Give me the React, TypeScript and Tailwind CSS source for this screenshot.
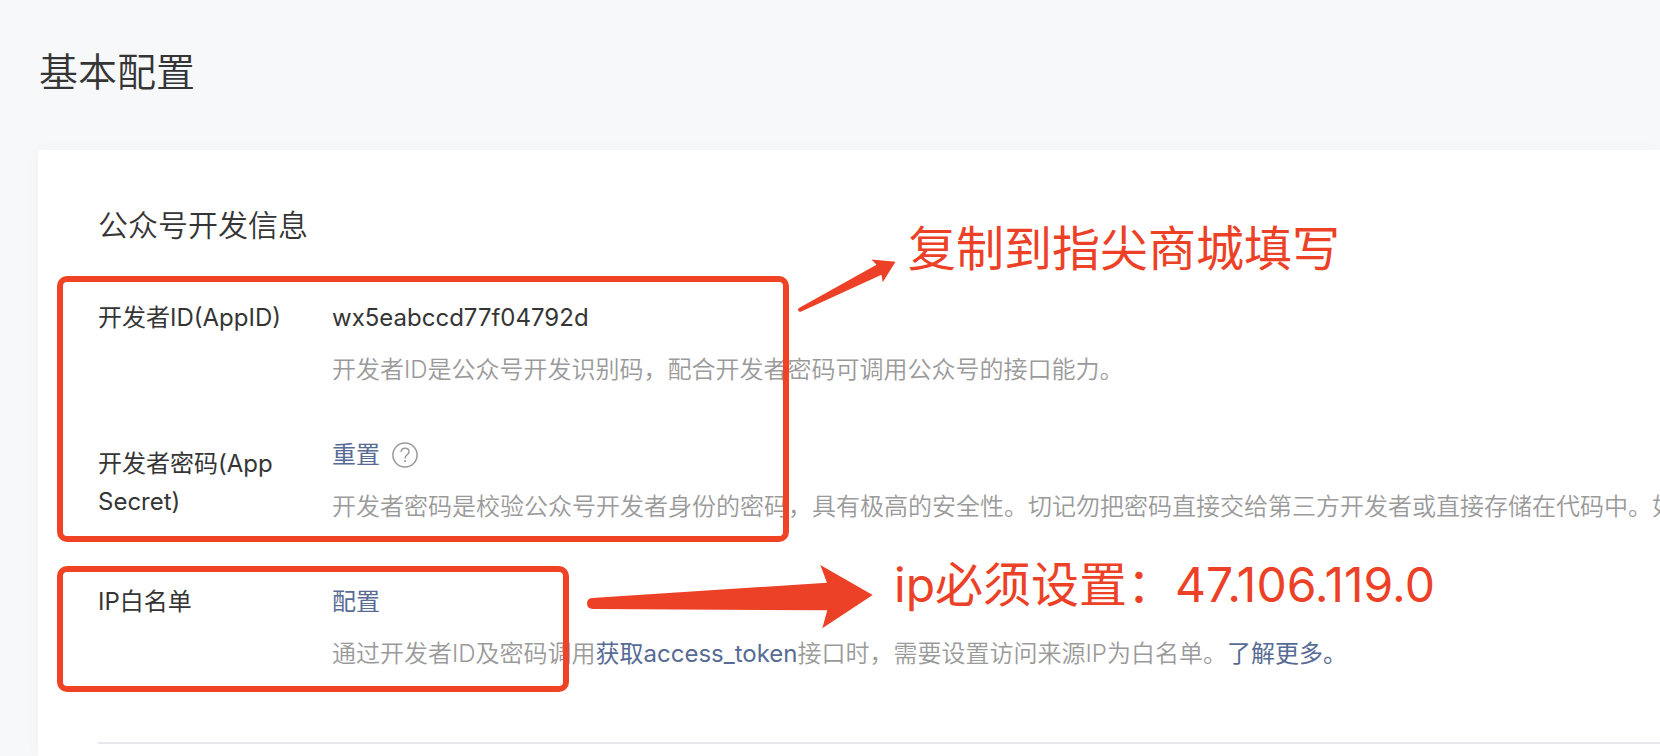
import clsx from 'clsx';
import type { ReactNode } from 'react';

type RowProps = {
  label: string;
  value: ReactNode;
  desc: ReactNode;
  labelClassName?: string;
};

function Row({ label, value, desc, labelClassName }: RowProps) {
  return (
    <div className="flex gap-11">
      <dt className={clsx('w-[190px] shrink-0', labelClassName)}>{label}</dt>
      <dd className="flex flex-col gap-[14px] whitespace-nowrap">
        <div className="flex items-center gap-3">{value}</div>
        <p className="font-[350] text-[#9a9a9a]">{desc}</p>
      </dd>
    </div>
  );
}

function HelpIcon() {
  return (
    <svg
      viewBox="0 0 26 26"
      className="size-[26px]"
      fill="none"
      stroke="#9a9a9a"
      strokeWidth="1.5"
    >
      <circle cx="13" cy="13" r="12.1" />
      <path d="M9.2 10c0-2.3 1.6-3.7 3.9-3.7s3.9 1.4 3.9 3.5c0 1.5-.8 2.2-2 3.1-1.3 1-1.9 1.7-1.9 3.6" />
      <path d="M13.1 18.3v1.8" strokeWidth="1.8" />
    </svg>
  );
}

export default function App() {
  return (
    <div className="relative min-h-screen overflow-hidden bg-[#f7f8fa] font-['Inter','Noto_Sans_CJK_SC',sans-serif] text-[24px] leading-[38px] text-[#353535]">
      <h1 className="px-[39px] pt-11 pb-[50px] text-[39px] leading-[56px] font-[350]">
        基本配置
      </h1>

      <main className="ml-[38px] min-h-[606px] rounded-tl bg-white pt-[54px] pl-[60px] shadow-[0_1px_16px_rgba(0,0,0,0.03)]">
        <h2 className="text-[30px] leading-[42px] font-[350]">
          公众号开发信息
        </h2>

        <dl className="flex flex-col gap-[47px] pt-[53px]">
          <Row
            label="开发者ID(AppID)"
            value="wx5eabccd77f04792d"
            desc="开发者ID是公众号开发识别码，配合开发者密码可调用公众号的接口能力。"
          />
          <Row
            labelClassName="pt-[9px] pb-[15px]"
            label="开发者密码(App Secret)"
            value={
              <>
                <button type="button" className="text-[#576b95]">
                  重置
                </button>
                <button type="button" aria-label="帮助">
                  <HelpIcon />
                </button>
              </>
            }
            desc="开发者密码是校验公众号开发者身份的密码，具有极高的安全性。切记勿把密码直接交给第三方开发者或直接存储在代码中。如"
          />
          <Row
            label="IP白名单"
            value={
              <button type="button" className="text-[#576b95]">
                配置
              </button>
            }
            desc={
              <>
                通过开发者ID及密码调用
                <a href="#token" className="font-normal text-[#576b95]">
                  获取access_token
                </a>
                接口时，需要设置访问来源IP为白名单。
                <a href="#more" className="font-normal text-[#576b95]">
                  了解更多。
                </a>
              </>
            }
          />
        </dl>

        <hr className="mt-[69px] border-t-2 border-[#e7e8eb]" />
      </main>

      {/* red marks drawn over the page */}
      <div className="pointer-events-none absolute inset-0 text-[48px] leading-[72px] whitespace-nowrap text-[#ec4126]">
        <div className="absolute top-[276px] left-[57px] h-[266px] w-[732px] rounded-[10px] border-6 border-[#f04224]" />
        <div className="absolute top-[566px] left-[57px] h-[126px] w-[512px] rounded-[10px] border-6 border-[#f04224]" />
        <div className="absolute top-[213px] left-[798px] flex items-start gap-[10px]">
          <svg
            viewBox="0 0 100 60"
            className="mt-[43px] h-[60px] w-[100px]"
            fill="currentColor"
          >
            <path d="M1 52 L78.5 8.8 L73.5 3.5 L97.5 5.8 L84.7 26.3 L83.5 18.7 L3.3 55.6 Q1 56.3 .2 54.5 Q-.4 53 1 52 Z" />
          </svg>
          <p>复制到指尖商城填写</p>
        </div>
        <div className="absolute top-[549px] left-[586px] flex items-start gap-5">
          <svg
            viewBox="0 0 288 66"
            className="mt-[15px] h-[66px] w-[288px]"
            fill="currentColor"
          >
            <path d="M6 34 L241 18.7 L234.3 1 L286.7 31 L236.3 64.3 L241.3 46.3 L7 45 Q1 44.5 1 39.5 Q1 34.5 6 34 Z" />
          </svg>
          <p>ip必须设置：47.106.119.0</p>
        </div>
      </div>
    </div>
  );
}
